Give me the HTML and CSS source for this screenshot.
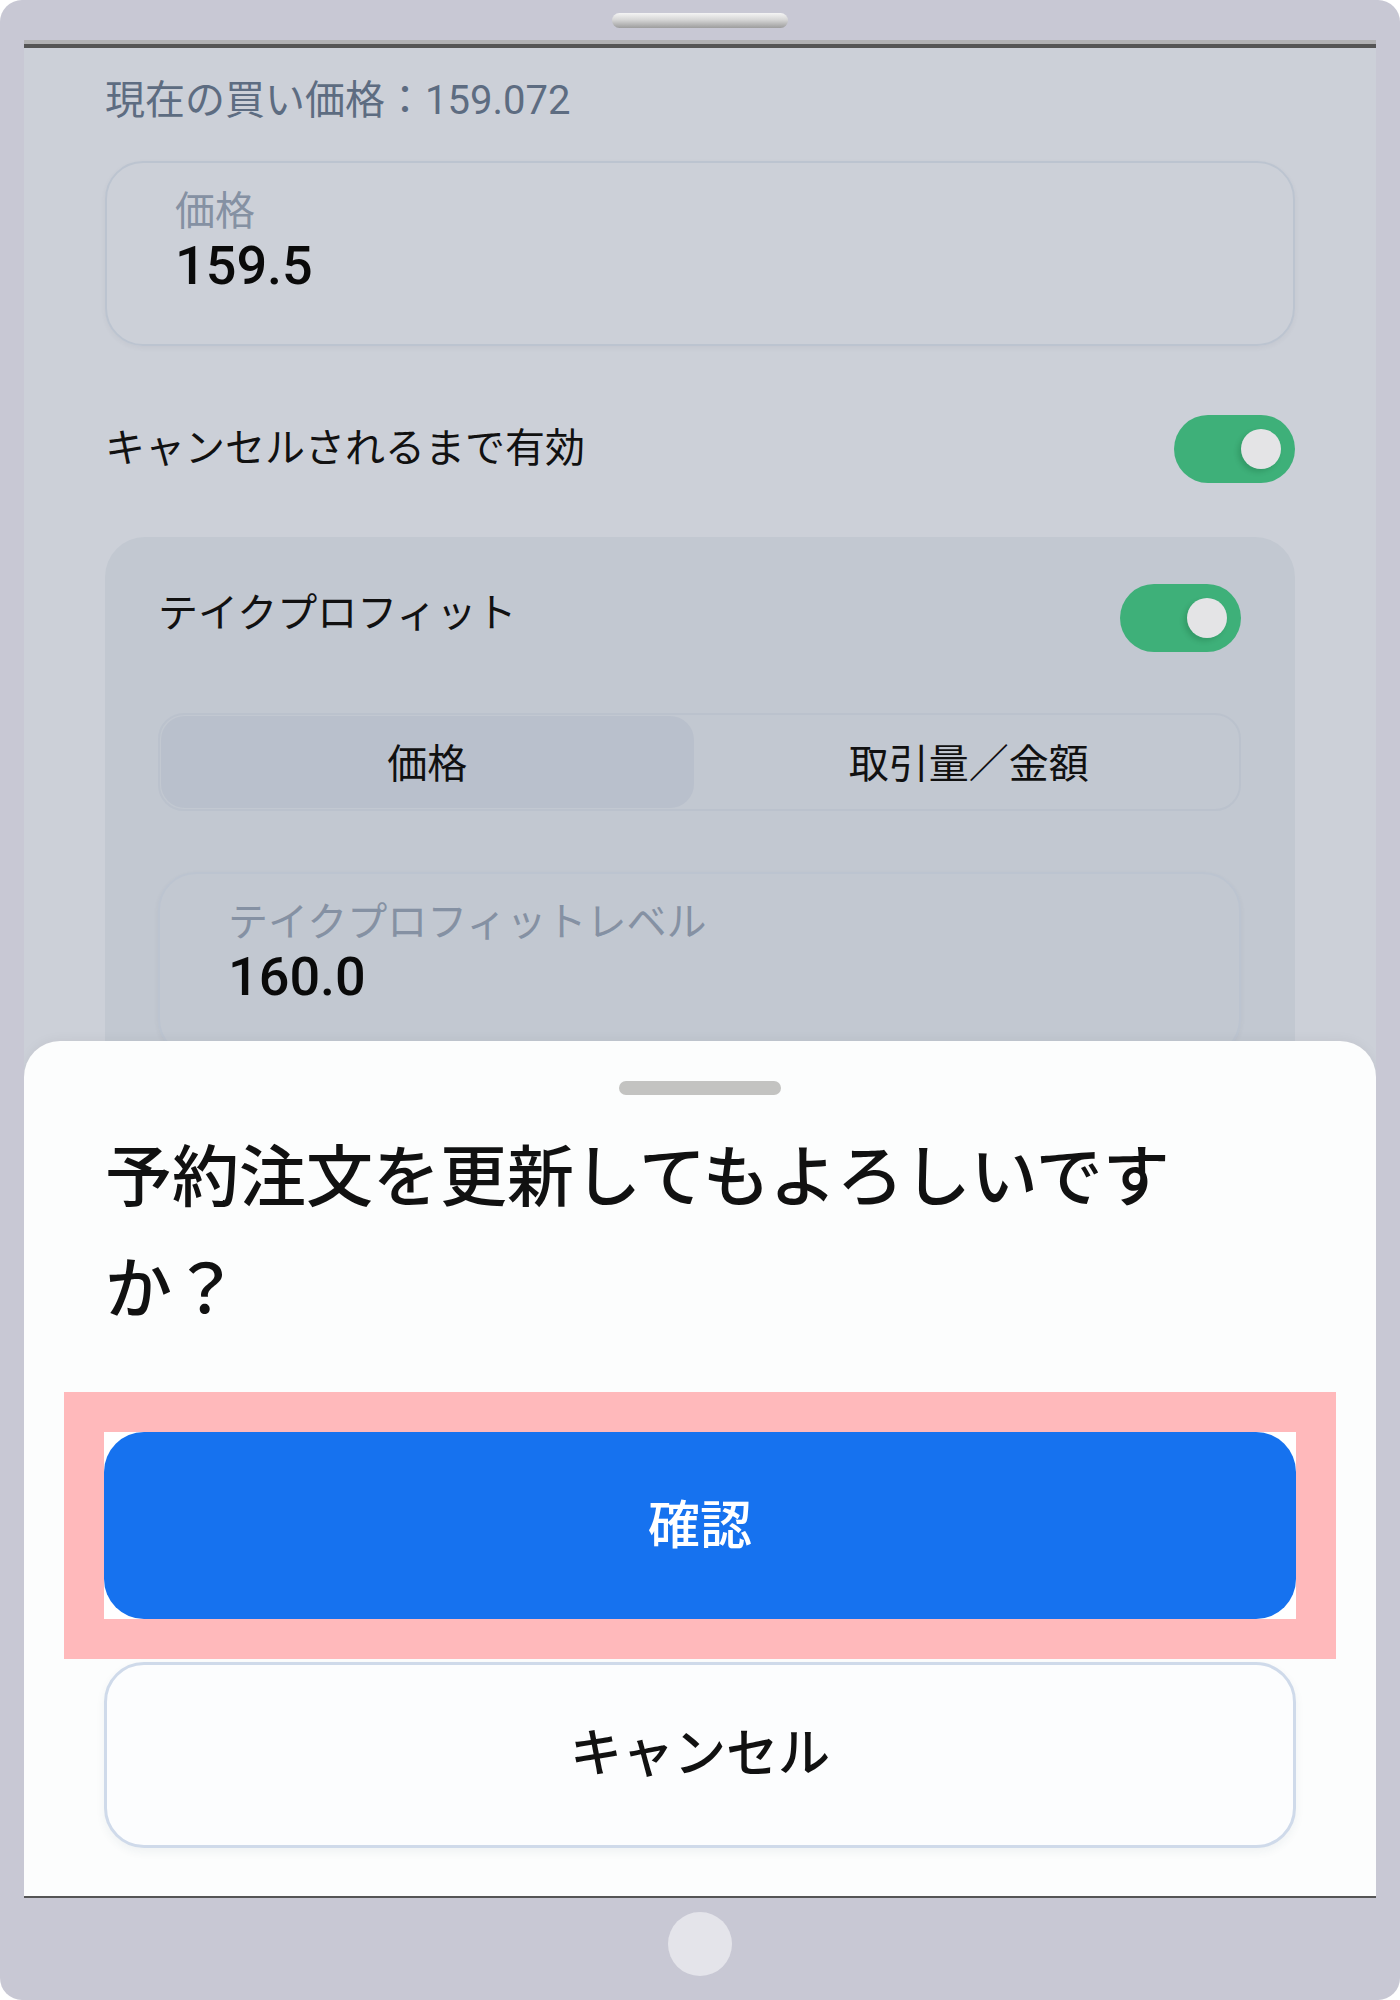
FILE: index.html
```html
<!DOCTYPE html>
<html lang="ja">
<head>
<meta charset="utf-8">
<title>予約注文の更新</title>
<link rel="stylesheet" href="styles.css">
</head>
<body>
<div class="device">
  <div class="bezel-top"><div class="speaker"></div></div>
  <div class="screen">
    <div class="current">現在の買い価格：159.072</div>
    <div class="field">
      <div class="field-label">価格</div>
      <div class="field-value">159.5</div>
    </div>
    <div class="toggle-row">
      <span class="row-text">キャンセルされるまで有効</span>
      <span class="toggle"><span class="knob"></span></span>
    </div>
    <div class="panel">
      <div class="toggle-row panel-head">
        <span class="row-text">テイクプロフィット</span>
        <span class="toggle"><span class="knob"></span></span>
      </div>
      <div class="segment">
        <div class="seg seg-active">価格</div>
        <div class="seg">取引量／金額</div>
      </div>
      <div class="field tp-field">
        <div class="field-label">テイクプロフィットレベル</div>
        <div class="field-value">160.0</div>
      </div>
    </div>

    <div class="sheet">
      <div class="handle"></div>
      <div class="title">予約注文を更新してもよろしいですか？</div>
      <div class="highlight">
        <div class="confirm-bg"><div class="btn-confirm">確認</div></div>
      </div>
      <div class="btn-cancel">キャンセル</div>
    </div>
  </div>
  <div class="bezel-bottom"><div class="home"></div></div>
</div>
</body>
</html>
```

FILE: styles.css
```css
html, body {
  margin: 0;
  padding: 0;
  background: #ffffff;
}
body {
  font-family: Roboto, "Noto Sans CJK JP", sans-serif;
  color: #111111;
}
.device {
  width: 1400px;
  height: 2000px;
  box-sizing: border-box;
  padding: 0 24px;
  background: #c8c8d4;
  border-radius: 22px;
  display: flex;
  flex-direction: column;
}
.bezel-top {
  height: 40px;
  border-bottom: 4px solid #b1b1b3;
  display: flex;
  justify-content: center;
}
.speaker {
  margin-top: 13px;
  width: 176px;
  height: 15px;
  border-radius: 8px;
  background: linear-gradient(#f4f4f4 0%, #d6d6d6 45%, #9d9d9d 100%);
}
.screen {
  position: relative;
  height: 1848px;
  box-sizing: content-box;
  border-top: 4px solid #555555;
  border-bottom: 2px solid #555555;
  background: #ccd0d8;
  overflow: hidden;
  padding: 0 81px;
}
.current {
  padding-top: 28px;
  font-size: 40px;
  line-height: 50px;
  color: #5d6c81;
}
.field {
  margin-top: 35px;
  height: 185px;
  box-sizing: border-box;
  border: 2px solid #bcc4d0;
  border-radius: 38px;
  padding: 27px 0 0 68px;
  box-shadow: 0 2px 5px rgba(60, 70, 90, 0.06);
}
.field-label {
  font-size: 40px;
  line-height: 44px;
  color: #8591a3;
}
.field-value {
  margin-top: 4px;
  font-size: 54px;
  line-height: 56px;
  font-weight: 500;
  color: #0a0a0a;
}
.toggle-row {
  margin-top: 69px;
  height: 68px;
  display: flex;
  align-items: center;
  justify-content: space-between;
}
.row-text {
  font-size: 40px;
  line-height: 50px;
  color: #111111;
}
.toggle {
  width: 121px;
  height: 68px;
  box-sizing: border-box;
  border-radius: 34px;
  background: #3eb079;
  display: flex;
  align-items: center;
  justify-content: flex-end;
  padding-right: 14px;
}
.knob {
  width: 40px;
  height: 40px;
  border-radius: 50%;
  background: #e4e4e6;
  box-shadow: -3px 3px 5px rgba(0, 60, 30, 0.18);
}
.panel {
  margin-top: 54px;
  background: #c2c8d1;
  border-radius: 40px;
  padding: 47px 54px 60px 53px;
}
.panel-head {
  margin-top: 0;
}
.panel-head .row-text {
  margin-top: -8px;
}
.segment {
  margin-top: 61px;
  height: 98px;
  box-sizing: border-box;
  border: 2px solid #bbc2cd;
  border-radius: 26px;
  display: grid;
  grid-template-columns: 1fr 1fr;
  padding: 1px;
}
.seg {
  display: flex;
  align-items: center;
  justify-content: center;
  font-size: 40px;
  color: #111111;
  border-radius: 24px;
  padding-bottom: 3px;
}
.seg-active {
  background: #b9c0cc;
  margin-right: 6px;
}
.tp-field {
  margin-top: 61px;
}
.sheet {
  position: absolute;
  left: 0;
  right: 0;
  bottom: 0;
  height: 855px;
  box-sizing: border-box;
  padding: 40px 81px 0;
  background: #fcfdfd;
  border-radius: 36px 36px 0 0;
  box-shadow: 0 -2px 12px rgba(0, 0, 0, 0.04);
}
.handle {
  width: 162px;
  height: 14px;
  border-radius: 7px;
  background: #c3c3c1;
  margin: 0 auto;
}
.title {
  margin-top: 27px;
  font-size: 67px;
  line-height: 112px;
  font-weight: 500;
  color: #111111;
}
.highlight {
  margin: 46px -41px 0;
  padding: 40px;
  background: #ffb9bb;
}
.confirm-bg {
  background: #ffffff;
}
.btn-confirm {
  height: 187px;
  box-sizing: border-box;
  padding-bottom: 9px;
  border-radius: 40px;
  background: #1672ef;
  color: #ffffff;
  font-size: 52px;
  font-weight: 500;
  display: flex;
  align-items: center;
  justify-content: center;
}
.btn-cancel {
  margin: 3px -1px 0;
  height: 186px;
  box-sizing: border-box;
  padding-bottom: 11px;
  border: 3px solid #cfdaea;
  border-radius: 40px;
  background: #fcfdfe;
  box-shadow: 0 4px 10px rgba(40, 60, 90, 0.06);
  font-size: 52px;
  font-weight: 500;
  color: #111111;
  display: flex;
  align-items: center;
  justify-content: center;
}
.bezel-bottom {
  flex: 1;
  display: flex;
  justify-content: center;
  padding-top: 14px;
}
.home {
  width: 64px;
  height: 64px;
  border-radius: 50%;
  background: #e4e4ea;
}
```
